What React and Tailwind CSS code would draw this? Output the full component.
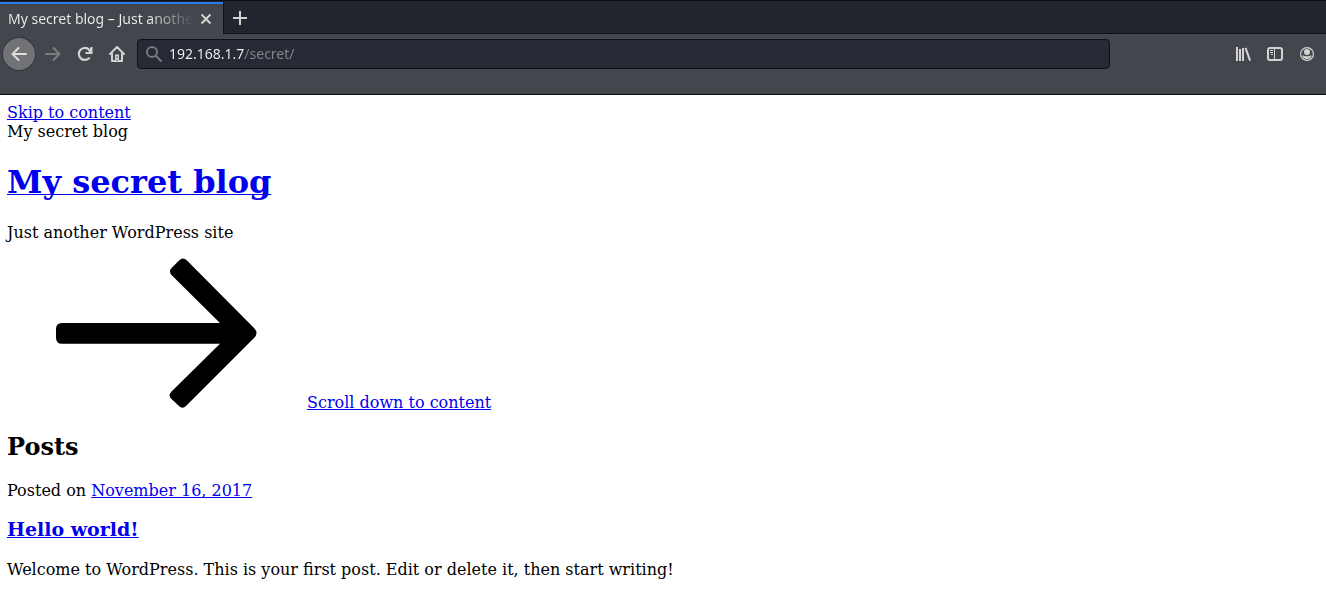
import React, { useState } from "react";

const iconButton = "flex h-8 w-8 items-center justify-center text-[#d3d3cf]";
const link = "text-[#0000ee] underline decoration-1 [text-decoration-skip-ink:none]";

function TabStrip() {
  return (
    <div className="flex h-[34px] border-t border-[#0c0e12] bg-[#23252e] pt-px">
      <div className="flex w-[223px] items-center border-t-2 border-[#2a7bf0] bg-[#43464d] pl-2">
        <span className="w-[186px] overflow-hidden bg-gradient-to-r from-[#eeeeec] from-75% to-transparent bg-clip-text text-sm whitespace-nowrap text-transparent">
          My secret blog – Just another WordPress site
        </span>
        <button aria-label="Close tab" className="flex h-6 w-6 items-center justify-center text-[#d3d3cf]">
          <svg width="12" height="12" viewBox="0 0 12 12" fill="none" stroke="currentColor" strokeWidth="2">
            <path d="M1.500 1.500l9 9M10.500 1.500l-9 9" />
          </svg>
        </button>
      </div>
      <div className="flex flex-1 items-center border-b border-l border-[#101218]">
        <button aria-label="New tab" className="flex h-8 w-8 items-center justify-center text-[#d3d3cf]">
          <svg width="14" height="14" viewBox="0 0 14 14" fill="none" stroke="currentColor" strokeWidth="2">
            <path d="M7 0v14M0 7h14" />
          </svg>
        </button>
      </div>
    </div>
  );
}

function AddressBar() {
  const [url, setUrl] = useState("192.168.1.7/secret/");
  return (
    <label className="ml-1 flex h-[30px] max-w-[973px] flex-1 items-center rounded border border-[#0f1115] bg-[#272935] pl-2">
      <svg className="shrink-0 text-[#77787d]" width="16" height="16" viewBox="0 0 16 16" fill="none" stroke="currentColor" strokeWidth="2" strokeLinecap="round">
        <circle cx="6" cy="6" r="5" />
        <path d="M9.8 9.8L15 15" />
      </svg>
      <input
        aria-label="Address"
        value={url}
        onChange={(e) => setUrl(e.target.value)}
        className="ml-[7px] min-w-0 flex-1 bg-[linear-gradient(to_right,#f4f4f2_76px,#85868b_76px)] bg-clip-text text-sm text-transparent caret-white outline-none"
      />
    </label>
  );
}

function Toolbar() {
  return (
    <div className="flex h-[61px] items-start border-b border-[#0c0c10] bg-[#43464d] px-[3px] pt-1">
      <div className="flex flex-1 items-center">
        <button aria-label="Back" className="mr-0.5 flex h-8 w-8 items-center justify-center rounded-full bg-[#727377] text-[#deded9] ring-1 ring-[#34363c]">
          <svg width="16" height="16" viewBox="0 0 16 16" fill="none" stroke="currentColor" strokeWidth="2" strokeLinecap="round" strokeLinejoin="round">
            <path d="M15 8H1.500M7.500 2l-6 6 6 6" />
          </svg>
        </button>
        <button aria-label="Forward" className="flex h-8 w-8 items-center justify-center text-[#7c7d81]">
          <svg width="16" height="16" viewBox="0 0 16 16" fill="none" stroke="currentColor" strokeWidth="2" strokeLinecap="round" strokeLinejoin="round">
            <path d="M1 8h13.500M8.500 2l6 6-6 6" />
          </svg>
        </button>
        <button aria-label="Reload" className={iconButton}>
          <svg width="16" height="16" viewBox="0 0 16 16" fill="none" stroke="currentColor" strokeWidth="2.200">
            <path d="M12 12.300A6 6 0 1 1 11.500 3.200L13.500 5.500" strokeLinecap="round" />
            <path d="M15.500 1v7H8.500V6H12L13.500 1z" fill="currentColor" stroke="none" />
          </svg>
        </button>
        <button aria-label="Home" className={iconButton}>
          <svg width="16" height="16" viewBox="0 0 16 16" fill="none" stroke="currentColor" strokeWidth="2" strokeLinecap="round" strokeLinejoin="round">
            <path d="M1 8l7-7 7 7M3 7.500V15h10V7.500" />
            <path d="M6 8.500h4V15H6z" fill="currentColor" stroke="none" />
            <path d="M8 10.500v1M8 14v.5" stroke="#43464d" strokeWidth="1" />
          </svg>
        </button>
        <AddressBar />
      </div>
      <div className="flex h-8 items-center pl-4">
        <button aria-label="Library" className={iconButton}>
          <svg width="16" height="16" viewBox="0 0 16 16" fill="currentColor">
            <path d="M1 1h2v14H1zM4 3h2v12H4zM7 2h2v13H7zM9.600 2.300l1.900-.7L16 14.300l-1.900.7z" />
          </svg>
        </button>
        <button aria-label="Sidebars" className={iconButton}>
          <svg width="16" height="16" viewBox="0 0 16 16" fill="none" stroke="currentColor" strokeWidth="2">
            <rect x="1" y="2" width="14" height="12" rx="2" />
            <path d="M7.500 2v12" strokeWidth="1" />
            <path d="M3 4.500h3M3 6.500h3M4 8.500h2" strokeWidth="1" />
          </svg>
        </button>
        <button aria-label="Account" className={iconButton}>
          <svg width="14" height="14" viewBox="0 0 14 14" fill="currentColor">
            <circle cx="7" cy="7" r="6.400" fill="none" stroke="currentColor" strokeWidth="1.200" />
            <circle cx="7" cy="5" r="3" />
            <path d="M2.500 8.500c1.200 0 2.300.8 4.500.8s3.300-.8 4.500-.8c0 2-2 3.600-4.500 3.600s-4.500-1.600-4.500-3.600z" />
          </svg>
        </button>
      </div>
    </div>
  );
}

export default function App() {
  return (
    <div className="min-h-screen bg-white">
      <header className="font-['Noto_Sans',sans-serif]">
        <TabStrip />
        <Toolbar />
      </header>
      <main className="px-[7px] pt-2 font-['DejaVu_Serif',serif] text-base leading-[19px] text-black">
        <a href="#content" className={link}>Skip to content</a>
        <div>My secret blog</div>
        <h1 className="mt-[22px] text-[32px] leading-[38px] font-bold">
          <a href="#home" className={link}>My secret blog</a>
        </h1>
        <p className="mt-[22px]">Just another WordPress site</p>
        <div className="mt-4 flex items-end">
          <svg className="mb-1 shrink-0" width="300" height="150" viewBox="0 0 300 150" aria-hidden="true">
            <path d="M55 65H213L165 17.500Q161 13.500 165 9.500L172 2.500Q176 -1.500 180 2.500L247 70Q252 75 247 80L179 148Q175.500 151.500 172 148L164.500 141Q160.500 137.500 164.500 133.500L213 85.700H55Q49 85.700 49 79.700V71Q49 65 55 65Z" />
          </svg>
          <a href="#content" className={link}>Scroll down to content</a>
        </div>
        <h2 className="mt-[21px] text-2xl leading-[28px] font-bold">Posts</h2>
        <article id="content">
          <p className="mt-5">
            Posted on <a href="#date" className={link}>November 16, 2017</a>
          </p>
          <h3 className="mt-[18px] text-[19px] leading-[22px] font-bold">
            <a href="#hello-world" className={link}>Hello world!</a>
          </h3>
          <p className="mt-5">
            Welcome to WordPress. This is your first post. Edit or delete it, then start writing!
          </p>
        </article>
      </main>
    </div>
  );
}
